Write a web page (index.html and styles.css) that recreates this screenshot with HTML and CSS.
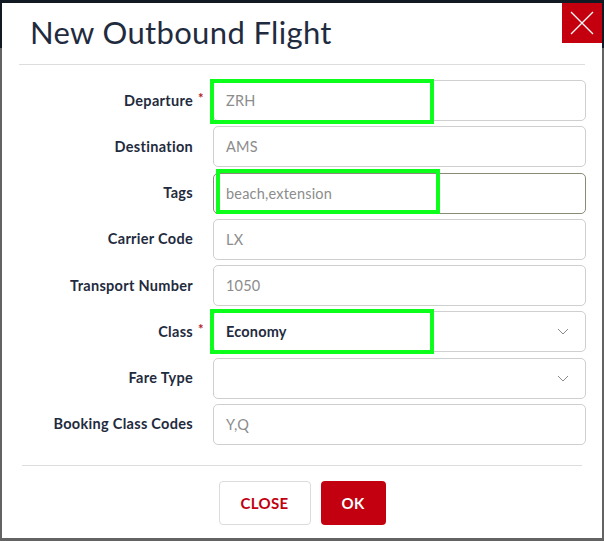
FILE: index.html
```html
<!DOCTYPE html>
<html lang="en">
<head>
<meta charset="utf-8">
<title>New Outbound Flight</title>
<link rel="stylesheet" href="styles.css">
</head>
<body>
<div class="modal">
  <button class="x-btn" type="button" aria-label="Close">
    <svg width="24" height="24" viewBox="0 0 24 24"><path d="M1 1 L23 23 M23 1 L1 23" stroke="#fff" stroke-width="1.3" fill="none"/></svg>
  </button>
  <header class="modal-header">
    <h1 class="title">New Outbound Flight</h1>
  </header>
  <form class="form">
    <div class="row">
      <label class="label req">Departure<span class="star">*</span></label>
      <div class="field">ZRH</div>
    </div>
    <div class="row">
      <label class="label">Destination</label>
      <div class="field">AMS</div>
    </div>
    <div class="row">
      <label class="label">Tags</label>
      <div class="field focus">beach,extension</div>
    </div>
    <div class="row">
      <label class="label">Carrier Code</label>
      <div class="field">LX</div>
    </div>
    <div class="row">
      <label class="label">Transport Number</label>
      <div class="field">1050</div>
    </div>
    <div class="row">
      <label class="label req">Class<span class="star">*</span></label>
      <div class="field select"><span class="val">Economy</span>
        <svg class="chev" width="12" height="7" viewBox="0 0 12 7"><path d="M1 1 L6 6 L11 1" stroke="#8a8a8a" stroke-width="1" fill="none"/></svg>
      </div>
    </div>
    <div class="row">
      <label class="label">Fare Type</label>
      <div class="field select"><span class="val"></span>
        <svg class="chev" width="12" height="7" viewBox="0 0 12 7"><path d="M1 1 L6 6 L11 1" stroke="#8a8a8a" stroke-width="1" fill="none"/></svg>
      </div>
    </div>
    <div class="row">
      <label class="label">Booking Class Codes</label>
      <div class="field">Y,Q</div>
    </div>
  </form>
  <footer class="modal-footer">
    <button class="btn btn-close" type="button">CLOSE</button>
    <button class="btn btn-ok" type="button">OK</button>
  </footer>
</div>
<div class="hl hl-dep"></div>
<div class="hl hl-tags"></div>
<div class="hl hl-class"></div>
</body>
</html>
```
FILE: styles.css
```css
html, body {
  margin: 0;
  padding: 0;
}
body {
  width: 604px;
  height: 541px;
  overflow: hidden;
  background: linear-gradient(to bottom, #111922 0, #111922 48px, #636363 48px, #636363 100%);
  font-family: "Lato", "Liberation Sans", sans-serif;
  position: relative;
}
.modal {
  position: relative;
  margin: 3px 0 0 2px;
  width: 600px;
  height: 535px;
  background: #fff;
  box-sizing: border-box;
}
.x-btn {
  position: absolute;
  top: 0;
  right: 0;
  width: 40px;
  height: 40px;
  padding: 0;
  border: 0;
  background: #c4000f;
  display: flex;
  align-items: center;
  justify-content: center;
}
.modal-header {
  margin: 0 17px 0 17px;
  height: 61px;
  border-bottom: 1px solid #dddddd;
  box-sizing: content-box;
}
.title {
  margin: 0;
  padding: 11px 0 0 11px;
  font-family: "Lato", sans-serif;
  font-weight: 400;
  font-size: 31px;
  line-height: 36px;
  color: #1f2b3e;
  letter-spacing: 0.35px;
}
.form {
  padding-top: 15px;
  display: flex;
  flex-direction: column;
  gap: 5.25px;
}
.row {
  display: grid;
  grid-template-columns: 191px 373px;
  column-gap: 20px;
  align-items: center;
}
.label {
  position: relative;
  justify-self: end;
  font-weight: 700;
  font-size: 14.5px;
  letter-spacing: 0.3px;
  color: #1f2b3e;
  margin-top: -1px;
}
.star {
  position: absolute;
  left: 100%;
  top: -2px;
  margin-left: 5px;
  color: #b0212a;
  font-size: 13px;
}
.field {
  height: 41px;
  box-sizing: border-box;
  border: 1px solid #cfcfcf;
  border-radius: 5px;
  padding: 0 12px;
  display: flex;
  align-items: center;
  font-size: 14.5px;
  letter-spacing: 0.2px;
  color: #8c8c8c;
}
.field.focus {
  border-color: #8a8a78;
}
.select {
  justify-content: space-between;
}
.select .val {
  color: #1f2b3e;
  font-weight: 700;
}
.chev {
  margin-right: 4px;
}
.modal-footer {
  margin: 20px 20px 0 20px;
  border-top: 1px solid #dddddd;
  padding-top: 15px;
  display: flex;
  justify-content: center;
  gap: 10px;
}
.btn {
  height: 44px;
  border-radius: 4px;
  font-family: "Lato", sans-serif;
  font-weight: 700;
  font-size: 15px;
  letter-spacing: 0.3px;
  padding: 0;
}
.btn-close {
  width: 92px;
  background: #fff;
  border: 1px solid #dcdcdc;
  color: #c2000f;
}
.btn-ok {
  width: 65px;
  background: #c2000f;
  border: 0;
  color: #fff;
}
.hl {
  position: absolute;
  border: 4px solid #0bff1a;
  box-sizing: border-box;
  pointer-events: none;
}
.hl-dep {
  left: 210px;
  top: 79px;
  width: 224px;
  height: 45px;
}
.hl-tags {
  left: 216px;
  top: 169px;
  width: 224px;
  height: 45px;
}
.hl-class {
  left: 210px;
  top: 309px;
  width: 224px;
  height: 45px;
}
```
